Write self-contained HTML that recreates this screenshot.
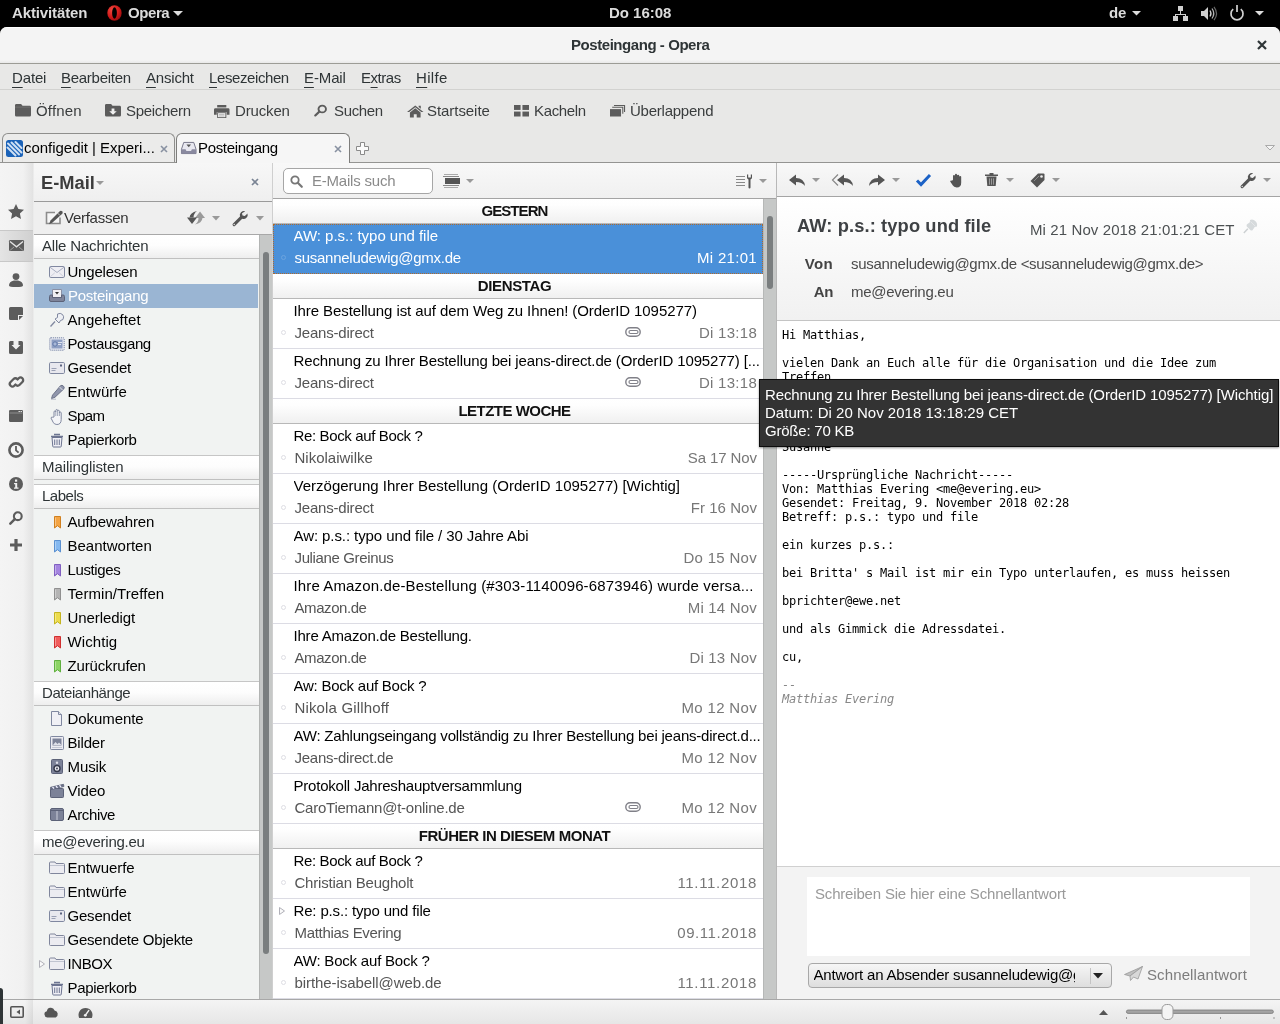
<!DOCTYPE html>
<html lang="de">
<head>
<meta charset="utf-8">
<title>Posteingang - Opera</title>
<style>
*{box-sizing:border-box;margin:0;padding:0}
html,body{width:1280px;height:1024px;overflow:hidden;background:#000}
html{will-change:transform}
body{position:relative;font-family:"Liberation Sans","DejaVu Sans",sans-serif;font-size:15px;color:#2e3436;line-height:18px}
.a{position:absolute;white-space:nowrap}
svg{position:absolute;overflow:visible}
u{text-decoration:underline;text-underline-offset:4px;text-decoration-thickness:1px}
#topbar{left:0;top:0;width:1280px;height:27px;background:#000}
#topbar .t{top:3.500px;font-weight:bold;color:#dcdcdc}
#win{left:0;top:27px;width:1280px;height:997px;background:#e8e8e7;border-radius:7px 7px 0 0;overflow:hidden}
#title{left:0;top:0;width:1280px;height:37px;background:linear-gradient(#fff 0,#fff 1px,#f4f4f4 1px,#f4f4f4 33px,#e9e9e9 36px);border-bottom:1px solid #9c9c96}
#title .t{top:9px;font-weight:bold;color:#2e3436}
#menubar{left:0;top:37px;width:1280px;height:26px;background:#e8e8e7;border-bottom:1px solid #d2d2d0}
#menubar .t{top:4.500px;color:#2e3436}
#toolbar{left:0;top:63px;width:1280px;height:41px;background:#e8e8e7}
#toolbar .t{top:12px;color:#3a3d3e}
#tabbar{left:0;top:104px;width:1280px;height:32px;background:#e8e8e7;border-bottom:1px solid #949492}
.tab{top:2px;height:29px;border:1px solid #8e8e8c;border-bottom:none;border-radius:6px 6px 0 0;background:#ebebea}
.tab.act{background:#f6f6f6;height:30px;border-color:#7e7e7c}
.tab .t{top:5px;color:#000}
/* content */
#content{left:0;top:136px;width:1280px;height:836px;background:#f2f2f2}
#strip{left:0;top:0;width:33px;height:836px;background:linear-gradient(90deg,#f4f4f4 0,#f1f1f1 70%,#e2e2e2 100%)}
#stripsel{left:0;top:67px;width:33px;height:32px;background:linear-gradient(90deg,#e4e4e4,#d0d0d0);border-top:1px solid #c8c8c8;border-bottom:1px solid #c8c8c8}
#panel{left:33px;top:0;width:240px;height:836px;background:#f1f3f2;border-left:1px solid #ebebeb;border-right:1px solid #cfcfcf}
#phead{left:0;top:0;width:238px;height:39px;background:linear-gradient(#f7f7f7,#efefef);border-bottom:1px solid #9a9a9a}
#phead .t{left:7px;top:9px;font-size:18.3px;font-weight:bold;color:#3c3c3c;line-height:22px}
#ptool{left:0;top:39px;width:238px;height:33px;background:#efefef;border-bottom:1px solid #a8a8a8}
#ptool .t{left:30px;top:7px;color:#333}
#tree{left:0;top:72px;width:226px;height:764px;background:#f1f3f2;overflow:hidden}
.th{left:0;width:226px;height:25px;border-top:1px solid #c6c6c6;border-bottom:1px solid #c0c0c0;background:linear-gradient(#ffffff 0,#fdfdfd 45%,#eeeeee 100%);padding:2px 0 0 8px;color:#2e3436}
.tr{left:0;width:226px;height:24px;padding:3px 0 0 33.500px;color:#000}
.tr.sel{left:0;width:224px;background:#9ab5d3;color:#fff;padding-left:34px}
#pscroll{left:225px;top:72px;width:13px;height:764px;background:#c6c8c7;border-left:1px solid #b2b4b3}
#pthumb{left:3px;top:17px;width:6px;height:702px;background:#7a7e7f;border-radius:3px}
/* list */
#list{left:273px;top:0;width:503px;height:836px;background:#fff}
#lbar{left:0;top:0;width:503px;height:36px;background:linear-gradient(#f8f8f8,#f0f0f0);border-bottom:1px solid #a4a4a4}
#search{left:10px;top:5px;width:150px;height:26px;background:#fff;border:1px solid #a6a6a6;border-radius:5px}
#search .t{left:28px;top:3px;color:#8a8a8a}
.gh{left:0;width:490px;height:25px;border-bottom:1px solid #b8b8b8;background:linear-gradient(#ffffff 0,#fefefe 25%,#f0f0f0 100%);text-align:center;font-weight:bold;color:#111;padding:3px 7px 0 0}
.it{left:0;width:490px;height:50px;border-bottom:1px solid #dcdce4;background:#fff}
.it .s{left:20.500px;top:3px;color:#000;max-width:468px;overflow:hidden}
.it .f{left:21.500px;top:25px;color:#555}
.it .d{right:6px;top:25px;color:#777}
.it .c{left:8px;top:31px;width:5px;height:5px;border:1px solid #dedee4;border-radius:50%}
.it.sel{background:#4a90d9;border-bottom:none;height:50px;outline:1px dotted #b06a2c;outline-offset:-1px}
.it.sel .s,.it.sel .f,.it.sel .d{color:#fff}
.it.sel .c{border-color:#6ba4e0}
#lscroll{left:490px;top:36px;width:13px;height:800px;background:#c6c8c7;border-left:1px solid #b6b8b7}
#lthumb{left:3px;top:17px;width:6px;height:73px;background:#7a7e7f;border-radius:3px}
/* message */
#msg{left:776px;top:0;width:504px;height:836px;background:#fff;border-left:1px solid #b8b8b8}
#mbar{left:0;top:0;width:503px;height:34px;background:linear-gradient(#f8f8f8,#efefef);border-bottom:1px solid #a4a4a4}
#mhead{left:0;top:34px;width:503px;height:124px;background:linear-gradient(#ffffff,#f1f1f1);border-bottom:1px solid #c4c4c4}
#mhead .h{left:20px;top:17px;font-size:18.3px;font-weight:bold;color:#3e4144;line-height:24px}
#mhead .dt{left:253px;top:24px;color:#4c5052}
#mhead .k{font-weight:bold;color:#444;text-align:right;width:40px;left:16px}
#mhead .v{left:74px;color:#4a4a4a}
#mbody{left:0;top:158px;width:503px;height:545px;background:#fff}
#mbody pre{position:absolute;left:5px;top:7px;font-family:"DejaVu Sans Mono","Liberation Mono",monospace;font-size:12px;line-height:14px;color:#000;letter-spacing:-0.224px}
#mbody pre i{color:#888}
#qr{left:0;top:703px;width:503px;height:133px;background:#f3f3f3;border-top:1px solid #d0d0d0}
#qrt{left:30px;top:10px;width:443px;height:79px;background:#fff}
#qrt .t{left:8px;top:8px;color:#999}
#qsel{left:31px;top:96px;width:304px;height:25px;border:1px solid #a8a8a8;border-radius:4px;background:linear-gradient(#f6f6f6,#dedede);overflow:hidden}
#qsel .t{left:4.500px;top:2px;color:#000;width:261.500px;overflow:hidden;letter-spacing:-0.190px}
#qsend{left:370px;top:99px;color:#7c7c7c}
/* status */
#status{left:0;top:972px;width:1280px;height:25px;background:linear-gradient(#f4f4f4,#e6e6e6);border-top:1px solid #a8a8a8}
/* tooltip */
#tip{left:759px;top:379px;width:520px;height:68px;background:#333;border:1px solid #0c0c0c;color:#fff;padding:6px 0 0 5px;line-height:18px;box-shadow:0 1px 2px rgba(0,0,0,.4)}
</style>
</head>
<body>
<div id="topbar" class="a">
<span class="a t" style="left:12px;letter-spacing:-0.126px">Aktivitäten</span>
<svg style="left:106.500px;top:4.500px" width="15" height="16" viewBox="0 0 15 16"><defs><radialGradient id="og" cx="0.35" cy="0.3" r="0.8"><stop offset="0" stop-color="#f04a40"/><stop offset="0.6" stop-color="#d01818"/><stop offset="1" stop-color="#8c0c0c"/></radialGradient></defs><ellipse cx="7.500" cy="8" rx="7.200" ry="7.700" fill="url(#og)"/><ellipse cx="7.500" cy="8" rx="2.400" ry="5.700" fill="#000"/></svg>
<span class="a t" style="left:128px;letter-spacing:-0.412px">Opera</span>
<svg style="left:173px;top:11px" width="10" height="5"><path d="M0 0h10l-5 5z" fill="#dcdcdc"/></svg>
<span class="a t" style="left:609px;letter-spacing:-0.029px">Do 16:08</span>
<span class="a t" style="left:1109px;letter-spacing:-0.108px">de</span>
<svg style="left:1132px;top:11px" width="10" height="5"><path d="M0 0h9l-4.500 4.500z" fill="#dcdcdc"/></svg>
<svg style="left:1173px;top:6px" width="16" height="15" fill="#d0d0d0"><rect x="5" y="0" width="5" height="5"/><rect x="0" y="10" width="5" height="5"/><rect x="10" y="10" width="5" height="5"/><path d="M7 5h1v3h5v2h-1v-1h-9v1h-1v-2h5z"/></svg>
<svg style="left:1201px;top:6px" width="16" height="15"><path d="M0 5h3l4-4v13l-4-4h-3z" fill="#d0d0d0"/><path d="M9 4.500q2 3 0 6" stroke="#d0d0d0" stroke-width="1.300" fill="none"/><path d="M11 2.500q3.500 5 0 10" stroke="#b0b0b0" stroke-width="1.300" fill="none"/><path d="M13 0.800q5 6.700 0 13.400" stroke="#666" stroke-width="1.200" fill="none"/></svg>
<svg style="left:1229px;top:5px" width="16" height="16"><path d="M4.200 4.200a6 6 0 1 0 7.600 0" stroke="#d0d0d0" stroke-width="1.700" fill="none"/><path d="M8 0v7" stroke="#d0d0d0" stroke-width="1.700"/></svg>
<svg style="left:1255px;top:11px" width="10" height="5"><path d="M0 0h9l-4.500 4.500z" fill="#dcdcdc"/></svg>
</div>
<div id="win" class="a">
<div id="title" class="a"><span class="a t" style="left:571px;letter-spacing:-0.442px">Posteingang - Opera</span><svg style="left:1257px;top:13px" width="10" height="10"><path d="M1 1l8 8M9 1l-8 8" stroke="#2e3436" stroke-width="2.200"/></svg></div>
<div id="menubar" class="a">
<span class="a t" style="left:12px;letter-spacing:-0.146px"><u>D</u>atei</span>
<span class="a t" style="left:61px;letter-spacing:-0.278px"><u>B</u>earbeiten</span>
<span class="a t" style="left:146px;letter-spacing:-0.200px"><u>A</u>nsicht</span>
<span class="a t" style="left:209px;letter-spacing:-0.403px"><u>L</u>esezeichen</span>
<span class="a t" style="left:304px;letter-spacing:-0.119px"><u>E</u>-Mail</span>
<span class="a t" style="left:361px;letter-spacing:-0.455px">E<u>x</u>tras</span>
<span class="a t" style="left:416px;letter-spacing:0.354px"><u>H</u>ilfe</span>
</div>
<div id="toolbar" class="a">
<svg style="left:15px;top:14px" width="16" height="12.500" viewBox="0 0 17 14" preserveAspectRatio="none"><path d="M1.500 0h5l1.500 2h7.500q1.500 0 1.500 1.500v9q0 1.500-1.500 1.500h-14q-1.500 0-1.500-1.500v-11q0-1.500 1.500-1.500z" fill="#5c5c5c"/><path d="M0 3.500h17" stroke="#777" stroke-width="0.800"/></svg>
<span class="a t" style="left:36px;letter-spacing:0.172px">Öffnen</span>
<svg style="left:105px;top:14px" width="16" height="12.500" viewBox="0 0 17 14" preserveAspectRatio="none"><path d="M1.500 0h5l1.500 2h7.500q1.500 0 1.500 1.500v9q0 1.500-1.500 1.500h-14q-1.500 0-1.500-1.500v-11q0-1.500 1.500-1.500z" fill="#5c5c5c"/><path d="M7 5h3v3h2.500l-4 4-4-4h2.500z" fill="#f0f0f0"/></svg>
<span class="a t" style="left:126px;letter-spacing:-0.305px">Speichern</span>
<svg style="left:213.500px;top:14.500px" width="15.500" height="13" viewBox="0 0 17 16" preserveAspectRatio="none"><rect x="3.500" y="0" width="10" height="3" fill="#5c5c5c"/><path d="M1.500 4h14q1.500 0 1.500 1.500v6.500h-3v-3h-11v3h-3v-6.500q0-1.500 1.500-1.500z" fill="#5c5c5c"/><rect x="4" y="9.500" width="9" height="6" fill="#f4f4f4" stroke="#5c5c5c" stroke-width="1"/><path d="M5.500 11.500h6M5.500 13.500h6" stroke="#999" stroke-width="0.800"/></svg>
<span class="a t" style="left:235px;letter-spacing:-0.151px">Drucken</span>
<svg style="left:314px;top:15px" width="13" height="12" viewBox="0 1 15 15" preserveAspectRatio="none"><circle cx="9.500" cy="6" r="4.300" fill="none" stroke="#5c5c5c" stroke-width="2.200"/><path d="M6.300 9.200l-4.800 4.800" stroke="#5c5c5c" stroke-width="2.600" stroke-linecap="round"/></svg>
<span class="a t" style="left:334px;letter-spacing:-0.346px">Suchen</span>
<svg style="left:406.500px;top:14.500px" width="16.500" height="12.500" viewBox="0 0 17 15" preserveAspectRatio="none"><path d="M8.500 0.500l8.500 8h-2.300l-6.200-5.800-6.200 5.800h-2.300z" fill="#5c5c5c"/><path d="M12 1h2.200v3.500l-2.200-2z" fill="#5c5c5c"/><path d="M3 9l5.500-5 5.500 5v6h-4v-4h-3v4h-4z" fill="#5c5c5c"/></svg>
<span class="a t" style="left:427px;letter-spacing:-0.058px">Startseite</span>
<svg style="left:513.500px;top:14.500px" width="15" height="11.500" viewBox="0 0 16 14" preserveAspectRatio="none" fill="#5c5c5c"><rect x="0" y="0" width="7" height="6"/><rect x="9" y="0" width="7" height="6"/><rect x="0" y="8" width="7" height="6"/><rect x="9" y="8" width="7" height="6"/></svg>
<span class="a t" style="left:534px;letter-spacing:-0.346px">Kacheln</span>
<svg style="left:610px;top:15px" width="15" height="11.500" viewBox="0 0 17 14" preserveAspectRatio="none"><path d="M4.500 0.500h12v8" fill="none" stroke="#5c5c5c" stroke-width="1.200"/><path d="M2.500 2.700h12v8" fill="none" stroke="#5c5c5c" stroke-width="1.200"/><rect x="0" y="5" width="12.500" height="9" fill="#5c5c5c"/></svg>
<span class="a t" style="left:630px;letter-spacing:-0.237px">Überlappend</span>
</div>
<div id="tabbar" class="a">
<div class="a tab" style="left:2px;width:173px">
<svg style="left:3px;top:6px" width="17" height="17" viewBox="0 0 17 17"><rect width="17" height="17" rx="2.500" fill="#1a62b8"/><g stroke="#cfe0f4" stroke-width="2" stroke-linecap="round"><path d="M2 3.500l11 11"/><path d="M5.500 2.500l10 10"/><path d="M1.500 7.500l8 8"/><path d="M9.500 2l6 6"/></g></svg>
<span class="a t" style="left:21px;letter-spacing:-0.030px">configedit | Experi...</span>
<svg style="left:157px;top:11px" width="8" height="8"><path d="M1 1l6 6M7 1l-6 6" stroke="#8891a1" stroke-width="1.600"/></svg>
</div>
<div class="a tab act" style="left:176px;width:174px">
<svg style="left:3.500px;top:7.500px" width="15.500" height="12" viewBox="0 0 17 14" preserveAspectRatio="none"><path d="M3 0.500h11l2.500 8v5h-16v-5z" fill="#e8e8f0" stroke="#6a6a80" stroke-width="1"/><path d="M0.500 8.500h4.500l1 2h5l1-2h4.500v5h-16z" fill="#8a8aa0"/><path d="M6 3h5l-2.500 3z" fill="#555"/></svg>
<span class="a t" style="left:21px;letter-spacing:-0.328px">Posteingang</span>
<svg style="left:157px;top:11px" width="8" height="8"><path d="M1 1l6 6M7 1l-6 6" stroke="#8891a1" stroke-width="1.600"/></svg>
</div>
<svg style="left:356px;top:11px" width="13" height="13"><path d="M4.500 0.500h4v4h4v4h-4v4h-4v-4h-4v-4h4z" fill="#fbfbfb" stroke="#8a8a8a" stroke-width="1"/></svg>
<svg style="left:1265px;top:14px" width="10" height="6"><path d="M0.500 0.500h9l-4.500 4.500z" fill="#f4f4f4" stroke="#aaa" stroke-width="1"/></svg>
</div>
<div id="content" class="a">
<div id="strip" class="a">
<div id="stripsel" class="a"></div>
<svg style="left:8.4px;top:40.9px" width="16" height="15" viewBox="0 0 16 15" ><path d="M8 0l2.400 5 5.600 0.700-4.100 3.800 1.100 5.500-5-2.800-5 2.800 1.100-5.500-4.100-3.800 5.600-0.700z" fill="#5c5c5c"/></svg>
<svg style="left:8.5px;top:77px" width="15" height="11" viewBox="0 0 15 11" ><rect width="15" height="11" rx="1.200" fill="#5c5c5c"/><path d="M1 1.500l6.500 5.300 6.500-5.300" fill="none" stroke="#e4e4e4" stroke-width="1.300"/><path d="M1.200 10.200l3.800-3.200M13.800 10.200l-3.800-3.200" stroke="#b0b0b0" stroke-width="0.800"/></svg>
<svg style="left:9px;top:110px" width="14" height="14" viewBox="0 0 14 14" ><circle cx="7" cy="3.600" r="3.400" fill="#5c5c5c"/><path d="M0 12.500q0-4 5-5h4q5 1 5 5 0 1.500-7 1.500t-7-1.500z" fill="#5c5c5c"/></svg>
<svg style="left:9px;top:144px" width="14" height="13" viewBox="0 0 14 13" ><path d="M1.500 0h11q1.500 0 1.500 1.500v6.500h-5v5h-7.500q-1.500 0-1.500-1.500v-10q0-1.500 1.500-1.500z" fill="#5c5c5c"/><path d="M10 9h4l-4 4z" fill="#5c5c5c"/></svg>
<svg style="left:9px;top:177.5px" width="14" height="13" viewBox="0 0 14 13" ><path d="M1.500 0h3v4h-2l4.500 4.500 4.500-4.500h-2v-4h3q1.500 0 1.500 1.500v10q0 1.500-1.500 1.500h-11q-1.500 0-1.500-1.500v-10q0-1.500 1.500-1.500z" fill="#5c5c5c"/></svg>
<svg style="left:8.5px;top:211.5px" width="15" height="14" viewBox="0 0 15 14" ><g fill="none" stroke="#5c5c5c" stroke-width="2.300" stroke-linecap="round"><path d="M6.500 9.500l-1.200 1.200a2.600 2.600 0 0 1-3.700-3.700l3-3a2.600 2.600 0 0 1 3.700 0"/><path d="M8.500 4.500l1.200-1.200a2.600 2.600 0 0 1 3.700 3.700l-3 3a2.600 2.600 0 0 1-3.700 0"/></g></svg>
<svg style="left:9px;top:247px" width="14" height="12" viewBox="0 0 14 12" ><rect width="14" height="12" rx="1.300" fill="#5c5c5c"/><path d="M0.500 3h13" stroke="#9a9a9a" stroke-width="0.800"/><rect x="9.500" y="1" width="1.500" height="1" fill="#ddd"/><rect x="11.500" y="1" width="1.500" height="1" fill="#ddd"/></svg>
<svg style="left:8px;top:279px" width="16" height="16" viewBox="0 0 16 16" ><circle cx="8" cy="8" r="6.600" fill="#f4f4f4" stroke="#5c5c5c" stroke-width="2.600"/><path d="M8 4v4.300l2.600 2.400" fill="none" stroke="#5c5c5c" stroke-width="1.800"/></svg>
<svg style="left:9px;top:314px" width="14" height="14" viewBox="0 0 14 14" ><circle cx="7" cy="7" r="7" fill="#5c5c5c"/><rect x="6" y="2.500" width="2.200" height="2.200" fill="#f0f0f0"/><path d="M5 6h3.200v4.500h1.300v1.200h-4.500v-1.200h1.200v-3.300h-1.200z" fill="#f0f0f0"/></svg>
<svg style="left:9px;top:348px" width="14" height="14" viewBox="0 0 14 14" ><circle cx="8.800" cy="5.200" r="3.900" fill="none" stroke="#5c5c5c" stroke-width="2.100"/><path d="M5.800 8.200l-4.500 4.500" stroke="#5c5c5c" stroke-width="2.500" stroke-linecap="round"/></svg>
<svg style="left:10px;top:375.5px" width="12" height="12" viewBox="0 0 12 12" ><path d="M4.400 0h3.200v4.400h4.400v3.200h-4.400v4.400h-3.200v-4.400h-4.400v-3.200h4.400z" fill="#5c5c5c"/></svg>
</div>
<div id="panel" class="a">
<div id="phead" class="a"><span class="a t" style="letter-spacing:-0.007px">E-Mail</span>
<svg style="left:62px;top:18px" width="8" height="4"><path d="M0 0h8l-4 4z" fill="#999"/></svg>
<svg style="left:217px;top:15px" width="8" height="8"><path d="M1 1l6 6M7 1l-6 6" stroke="#7a8494" stroke-width="1.700"/></svg>
</div>
<div id="ptool" class="a">
<svg style="left:11px;top:9px" width="18" height="14"><path d="M10 1.500h-8.500v11h13.500v-6" fill="#f6f6f6" stroke="#8c8c8c" stroke-width="1.600"/><path d="M15 0q1.500-0.500 2.300 0.500t0 2.300l-9.800 8.700-3.500 1.700 1.500-3.700z" fill="#555"/><path d="M12.500 2l2.500 2.500" stroke="#ddd" stroke-width="0.800"/></svg>
<span class="a t" style="letter-spacing:-0.269px">Verfassen</span>
<svg style="left:153px;top:9px" width="18" height="14"><path d="M8 7h10l-5-6.500z" fill="#9a9a9a"/><path d="M15.500 7q-0.500 5-7.500 6.500 3.500-2.500 3.500-6.500z" fill="#9a9a9a"/><path d="M0 6.500h10l-5 6.500z" fill="#555"/><path d="M2.500 6.500q0.500-5 7.500-6.500-3.500 2.500-3.500 6.500z" fill="#555"/></svg>
<svg style="left:178px;top:14px" width="8" height="4.500"><path d="M0 0h8l-4 4.500z" fill="#999"/></svg>
<svg style="left:198px;top:8px" width="16" height="17" viewBox="0 0 16 17"><path d="M13.300 1.200a4.200 4.200 0 0 0-5.300 5.300l-7 7a1.500 1.500 0 0 0 2.200 2.200l7-7a4.200 4.200 0 0 0 5.300-5.300l-2.700 2.700-2.300-0.500-0.500-2.300z" fill="#555"/><circle cx="2.200" cy="14.500" r="0.700" fill="#eee"/></svg>
<svg style="left:221.500px;top:14px" width="8" height="4.500"><path d="M0 0h8l-4 4.500z" fill="#999"/></svg>
</div>
<div id="tree" class="a">
<div class="a th" style="top:-1px"><span style="letter-spacing:-0.182px">Alle Nachrichten</span></div>
<div class="a tr" style="top:25px"><svg style="left:15px;top:4px" width="16" height="16" viewBox="0 0 16 16"><rect x="0.500" y="2.500" width="15" height="11" rx="1.200" fill="#eeeef3" stroke="#8088a0"/><path d="M1 3.200l7 5.300 7-5.300" fill="none" stroke="#a8aec0"/><path d="M1.200 12.800l4.600-4M14.800 12.800l-4.600-4" stroke="#c4c8d4" stroke-width="0.800"/></svg><span style="letter-spacing:-0.213px">Ungelesen</span></div>
<div class="a tr sel" style="top:49px"><svg style="left:15px;top:4px" width="16" height="16" viewBox="0 0 16 16"><path d="M3.500 1.500h9v8h-9z" fill="#f0f0f4" stroke="#8a90a4"/><path d="M6 4h4l-2 2.500z" fill="#333"/><path d="M0.500 8.500q0-1.500 1.500-1.500h1.500v2.500h9v-2.500h1.500q1.500 0 1.500 1.500v3.500q0 1.500-1.500 1.500h-12q-1.500 0-1.500-1.500z" fill="#7e849a" stroke="#5c6278"/></svg><span style="letter-spacing:-0.282px">Posteingang</span></div>
<div class="a tr" style="top:73px"><svg style="left:15px;top:4px" width="16" height="16" viewBox="0 0 16 16"><path d="M8.500 2q3-1.500 5 0.500t0.500 5l-2.500 1-1.500 2.500-4-4 2.500-1.500z" fill="#eef0f4" stroke="#8088a0"/><path d="M6 9.500l-4.500 5" stroke="#8088a0" stroke-width="1.300"/></svg><span style="letter-spacing:0.054px">Angeheftet</span></div>
<div class="a tr" style="top:97px"><svg style="left:15px;top:4px" width="16" height="16" viewBox="0 0 16 16"><rect x="0.800" y="1.800" width="14.400" height="12.400" rx="1" fill="#e6e9f1" stroke="#7a86a8" stroke-dasharray="1.200 0.800"/><rect x="2.500" y="3.500" width="11" height="9" fill="#8fa0c4"/><circle cx="6" cy="8" r="2.200" fill="#a8b8d8" stroke="#6078a8"/><path d="M9 6.500h4M9 8.500h3" stroke="#dfe3ee"/></svg><span style="letter-spacing:-0.389px">Postausgang</span></div>
<div class="a tr" style="top:121px"><svg style="left:15px;top:4px" width="16" height="16" viewBox="0 0 16 16"><rect x="0.500" y="2.500" width="15" height="11" rx="1.200" fill="#e8e8ee" stroke="#8088a0"/><path d="M2.500 8.500h5M2.500 10.500h4" stroke="#9aa0b4"/><rect x="11" y="4.500" width="2" height="2" fill="#5c6480"/></svg><span style="letter-spacing:-0.193px">Gesendet</span></div>
<div class="a tr" style="top:145px"><svg style="left:15px;top:4px" width="16" height="16" viewBox="0 0 16 16"><path d="M11.500 1.700q1.500-1 3 0.500t0 3l-8.500 8-3.500 1.500 1-3.500z" fill="#9096ac" stroke="#6c7288"/><path d="M10.500 3l3 3" stroke="#e0e2ea"/><path d="M2 15.200h5" stroke="#b8bcc8"/></svg><span style="letter-spacing:0.012px">Entwürfe</span></div>
<div class="a tr" style="top:169px"><svg style="left:15px;top:4px" width="16" height="16" viewBox="0 0 16 16"><path d="M5 9v-5q0-1 0.900-1t0.900 1v-1.500q0-1 0.900-1t0.900 1v0.800q0-1 0.900-1t0.900 1v1.700q0-1 0.900-1t0.900 1v6.500q0 5-4.300 5-2.800 0-3.800-2.300l-2-4q0-1.500 1.500-1z" fill="#f4f5f8" stroke="#8088a0" stroke-width="1"/><path d="M6.800 4v4M8.600 3.500v4.500M10.400 4.500v3.500" stroke="#8088a0" stroke-width="0.700"/></svg><span style="letter-spacing:-0.597px">Spam</span></div>
<div class="a tr" style="top:193px"><svg style="left:15px;top:4px" width="16" height="16" viewBox="0 0 16 16"><path d="M3 5.500h10l-0.800 9q0 0.500-0.700 0.500h-7q-0.700 0-0.700-0.500z" fill="#f0f0f6" stroke="#6c7490" stroke-width="1"/><path d="M2 4.500h12M5 2.500h6" stroke="#6c7490" stroke-width="1.600" fill="none"/><path d="M5.700 7.500v5.500M8 7.500v5.500M10.300 7.500v5.500" stroke="#6c7490" stroke-width="1" fill="none"/></svg><span style="letter-spacing:-0.345px">Papierkorb</span></div>
<div class="a th" style="top:220px"><span style="letter-spacing:-0.081px">Mailinglisten</span></div>
<div class="a th" style="top:249px"><span style="letter-spacing:-0.484px">Labels</span></div>
<div class="a tr" style="top:275px"><svg style="left:19.500px;top:5.500px" width="7" height="13"><path d="M0.500 0.500h6v11.500l-3-2.300-3 2.300z" fill="#f4a444" stroke="#d08020" stroke-width="1"/><path d="M1.500 1.500v8.500" stroke="rgba(255,255,255,.35)" stroke-width="1"/></svg><span style="letter-spacing:-0.164px">Aufbewahren</span></div>
<div class="a tr" style="top:299px"><svg style="left:19.500px;top:5.500px" width="7" height="13"><path d="M0.500 0.500h6v11.500l-3-2.300-3 2.300z" fill="#84b8f0" stroke="#5a90d0" stroke-width="1"/><path d="M1.500 1.500v8.500" stroke="rgba(255,255,255,.35)" stroke-width="1"/></svg><span style="letter-spacing:0.006px">Beantworten</span></div>
<div class="a tr" style="top:323px"><svg style="left:19.500px;top:5.500px" width="7" height="13"><path d="M0.500 0.500h6v11.500l-3-2.300-3 2.300z" fill="#a484e0" stroke="#8060c0" stroke-width="1"/><path d="M1.500 1.500v8.500" stroke="rgba(255,255,255,.35)" stroke-width="1"/></svg><span style="letter-spacing:-0.372px">Lustiges</span></div>
<div class="a tr" style="top:347px"><svg style="left:19.500px;top:5.500px" width="7" height="13"><path d="M0.500 0.500h6v11.500l-3-2.300-3 2.300z" fill="#b4b4b4" stroke="#909090" stroke-width="1"/><path d="M1.500 1.500v8.500" stroke="rgba(255,255,255,.35)" stroke-width="1"/></svg><span style="letter-spacing:0.059px">Termin/Treffen</span></div>
<div class="a tr" style="top:371px"><svg style="left:19.500px;top:5.500px" width="7" height="13"><path d="M0.500 0.500h6v11.500l-3-2.300-3 2.300z" fill="#ecdc4c" stroke="#c4b420" stroke-width="1"/><path d="M1.500 1.500v8.500" stroke="rgba(255,255,255,.35)" stroke-width="1"/></svg><span style="letter-spacing:-0.087px">Unerledigt</span></div>
<div class="a tr" style="top:395px"><svg style="left:19.500px;top:5.500px" width="7" height="13"><path d="M0.500 0.500h6v11.500l-3-2.300-3 2.300z" fill="#f05c5c" stroke="#d03030" stroke-width="1"/><path d="M1.500 1.500v8.500" stroke="rgba(255,255,255,.35)" stroke-width="1"/></svg><span style="letter-spacing:0.087px">Wichtig</span></div>
<div class="a tr" style="top:419px"><svg style="left:19.500px;top:5.500px" width="7" height="13"><path d="M0.500 0.500h6v11.500l-3-2.300-3 2.300z" fill="#8cd464" stroke="#60b040" stroke-width="1"/><path d="M1.500 1.500v8.500" stroke="rgba(255,255,255,.35)" stroke-width="1"/></svg><span style="letter-spacing:-0.159px">Zurückrufen</span></div>
<div class="a th" style="top:446px"><span style="letter-spacing:-0.435px">Dateianhänge</span></div>
<div class="a tr" style="top:472px"><svg style="left:15px;top:4px" width="16" height="16" viewBox="0 0 16 16"><path d="M2.500 0.500h7l3 3v11h-10z" fill="#f0f0f5" stroke="#8088a0"/><path d="M9.500 0.500v3h3" fill="#dfe1ea" stroke="#8088a0"/></svg><span style="letter-spacing:-0.069px">Dokumente</span></div>
<div class="a tr" style="top:496px"><svg style="left:15px;top:4px" width="16" height="16" viewBox="0 0 16 16"><rect x="1.500" y="1.500" width="13" height="13" rx="0.800" fill="#ececf2" stroke="#8088a0"/><rect x="3.500" y="3.500" width="9" height="7" fill="#7c8298"/><path d="M4 10l2.500-3 2 2 1.500-1.500 2.500 2.500z" fill="#dfe1ea"/><path d="M3 12.500h10" stroke="#c4c8d4"/></svg><span style="letter-spacing:-0.160px">Bilder</span></div>
<div class="a tr" style="top:520px"><svg style="left:15px;top:4px" width="16" height="16" viewBox="0 0 16 16"><rect x="2.500" y="0.500" width="11" height="14" rx="1" fill="#7c8298" stroke="#5c6278"/><circle cx="8" cy="9.500" r="3" fill="#e8e8ee" stroke="#33384a" stroke-width="1.400"/><circle cx="8" cy="9.500" r="0.900" fill="#33384a"/><circle cx="8" cy="3.800" r="1.200" fill="#dfe1ea"/></svg><span style="letter-spacing:-0.074px">Musik</span></div>
<div class="a tr" style="top:544px"><svg style="left:15px;top:4px" width="16" height="16" viewBox="0 0 16 16"><rect x="1.500" y="5.500" width="13" height="9" rx="0.800" fill="#7c8298" stroke="#5c6278"/><path d="M1.500 4.300l13-3 0.400 2.200-13 3z" fill="#6c7288" stroke="#5c6278" stroke-width="0.800"/><path d="M3.500 3.800l1.500 1.900M7 3l1.500 1.900M10.500 2.200l1.500 1.900" stroke="#eef" stroke-width="1.300"/></svg><span style="letter-spacing:-0.079px">Video</span></div>
<div class="a tr" style="top:568px"><svg style="left:15px;top:4px" width="16" height="16" viewBox="0 0 16 16"><rect x="1.500" y="1.500" width="13" height="12" rx="1.500" fill="#7c8298" stroke="#5c6278"/><path d="M1.500 3.500h13" stroke="#5c6278"/><path d="M8 4.500v8.500" stroke="#dfe1ea" stroke-width="1.600" stroke-dasharray="1 1"/></svg><span style="letter-spacing:-0.347px">Archive</span></div>
<div class="a th" style="top:595px"><span style="letter-spacing:-0.271px">me@evering.eu</span></div>
<div class="a tr" style="top:621px"><svg style="left:15px;top:4px" width="16" height="16" viewBox="0 0 16 16"><path d="M0.500 3q0-1 1-1h4.500l1 1.500h7.500q1 0 1 1v8q0 1-1 1h-13q-1 0-1-1z" fill="#ececf1" stroke="#80869c" stroke-width="1"/><path d="M1 5.500h14" stroke="#c0c4d0" stroke-width="1"/></svg><span style="letter-spacing:-0.050px">Entwuerfe</span></div>
<div class="a tr" style="top:645px"><svg style="left:15px;top:4px" width="16" height="16" viewBox="0 0 16 16"><path d="M0.500 3q0-1 1-1h4.500l1 1.500h7.500q1 0 1 1v8q0 1-1 1h-13q-1 0-1-1z" fill="#ececf1" stroke="#80869c" stroke-width="1"/><path d="M1 5.500h14" stroke="#c0c4d0" stroke-width="1"/></svg><span style="letter-spacing:0.012px">Entwürfe</span></div>
<div class="a tr" style="top:669px"><svg style="left:15px;top:4px" width="16" height="16" viewBox="0 0 16 16"><rect x="0.500" y="2.500" width="15" height="11" rx="1.200" fill="#e8e8ee" stroke="#8088a0"/><path d="M2.500 8.500h5M2.500 10.500h4" stroke="#9aa0b4"/><rect x="11" y="4.500" width="2" height="2" fill="#5c6480"/></svg><span style="letter-spacing:-0.193px">Gesendet</span></div>
<div class="a tr" style="top:693px"><svg style="left:15px;top:4px" width="16" height="16" viewBox="0 0 16 16"><path d="M0.500 3q0-1 1-1h4.500l1 1.500h7.500q1 0 1 1v8q0 1-1 1h-13q-1 0-1-1z" fill="#ececf1" stroke="#80869c" stroke-width="1"/><path d="M1 5.500h14" stroke="#c0c4d0" stroke-width="1"/></svg><span style="letter-spacing:-0.222px">Gesendete Objekte</span></div>
<div class="a tr" style="top:717px"><svg style="left:15px;top:4px" width="16" height="16" viewBox="0 0 16 16"><path d="M0.500 3q0-1 1-1h4.500l1 1.500h7.500q1 0 1 1v8q0 1-1 1h-13q-1 0-1-1z" fill="#ececf1" stroke="#80869c" stroke-width="1"/><path d="M1 5.500h14" stroke="#c0c4d0" stroke-width="1"/></svg><span style="letter-spacing:-0.398px">INBOX</span></div>
<div class="a tr" style="top:741px"><svg style="left:15px;top:4px" width="16" height="16" viewBox="0 0 16 16"><path d="M3 5.500h10l-0.800 9q0 0.500-0.700 0.500h-7q-0.700 0-0.700-0.500z" fill="#f0f0f6" stroke="#6c7490" stroke-width="1"/><path d="M2 4.500h12M5 2.500h6" stroke="#6c7490" stroke-width="1.600" fill="none"/><path d="M5.700 7.500v5.500M8 7.500v5.500M10.300 7.500v5.500" stroke="#6c7490" stroke-width="1" fill="none"/></svg><span style="letter-spacing:-0.345px">Papierkorb</span></div>
<svg style="left:5px;top:725px" width="6" height="8"><path d="M0.500 0.500l5 3.500-5 3.500z" fill="#fafafa" stroke="#b0b0b8" stroke-width="1"/></svg>
</div>
<div id="pscroll" class="a"><div id="pthumb" class="a"></div></div>
</div>
<div id="list" class="a">
<div id="lbar" class="a">
<div id="search" class="a"><svg style="left:6px;top:6px" width="13" height="13"><circle cx="5" cy="5" r="3.700" fill="none" stroke="#777" stroke-width="1.800"/><path d="M7.800 7.800l4 4" stroke="#777" stroke-width="2.200" stroke-linecap="round"/></svg><span class="a t" style="letter-spacing:-0.213px">E-Mails such</span></div>
<svg style="left:170px;top:11px" width="17" height="14"><rect x="1" y="0" width="14" height="1" fill="#aaa"/><rect x="0" y="2" width="16" height="1" fill="#888"/><rect x="2" y="4" width="15" height="6" fill="#555"/><rect x="0" y="11" width="16" height="1" fill="#888"/><rect x="1" y="13" width="14" height="1" fill="#aaa"/></svg>
<svg style="left:193px;top:16px" width="8" height="4"><path d="M0 0h8l-4 4z" fill="#999"/></svg>
<svg style="left:463px;top:11px" width="17" height="15"><path d="M0 2.500h9M0 5.500h9M0 8.500h9M0 11.500h9" stroke="#888" stroke-width="1"/><path d="M11 0.500v3q0 1.500 1.500 2v8q0 1 1 1t1-1v-8q1.500-0.500 1.500-2v-3h-1.200v3h-2.600v-3z" fill="#555"/></svg>
<svg style="left:486px;top:16px" width="8" height="4"><path d="M0 0h8l-4 4z" fill="#999"/></svg>
</div>
<div class="a gh" style="top:36px"><span style="letter-spacing:-0.924px">GESTERN</span></div>
<div class="a it sel" style="top:61px"><span class="a s" style="letter-spacing:-0.023px">AW: p.s.: typo und file</span><span class="a c"></span><span class="a f" style="letter-spacing:-0.271px">susanneludewig@gmx.de</span><span class="a d" style="letter-spacing:0.313px">Mi 21:01</span></div>
<div class="a gh" style="top:111px"><span style="letter-spacing:-0.357px">DIENSTAG</span></div>
<div class="a it" style="top:136px"><span class="a s" style="letter-spacing:-0.084px">Ihre Bestellung ist auf dem Weg zu Ihnen! (OrderID 1095277)</span><span class="a c"></span><span class="a f" style="letter-spacing:-0.200px">Jeans-direct</span><svg style="left:352px;top:28px" width="16" height="10"><rect x="0.800" y="0.800" width="14.400" height="8.400" rx="4.200" fill="none" stroke="#808088" stroke-width="1.400"/><rect x="4" y="3.500" width="9" height="3" rx="1.500" fill="none" stroke="#808088" stroke-width="1.200"/></svg><span class="a d" style="letter-spacing:0.272px">Di 13:18</span></div>
<div class="a it" style="top:186px"><span class="a s" style="letter-spacing:-0.126px">Rechnung zu Ihrer Bestellung bei jeans-direct.de (OrderID 1095277) [...</span><span class="a c"></span><span class="a f" style="letter-spacing:-0.200px">Jeans-direct</span><svg style="left:352px;top:28px" width="16" height="10"><rect x="0.800" y="0.800" width="14.400" height="8.400" rx="4.200" fill="none" stroke="#808088" stroke-width="1.400"/><rect x="4" y="3.500" width="9" height="3" rx="1.500" fill="none" stroke="#808088" stroke-width="1.200"/></svg><span class="a d" style="letter-spacing:0.272px">Di 13:18</span></div>
<div class="a gh" style="top:236px"><span style="letter-spacing:-0.523px">LETZTE WOCHE</span></div>
<div class="a it" style="top:261px"><span class="a s" style="letter-spacing:-0.361px">Re: Bock auf Bock ?</span><span class="a c"></span><span class="a f">Nikolaiwilke</span><span class="a d" style="letter-spacing:-0.083px">Sa 17 Nov</span></div>
<div class="a it" style="top:311px"><span class="a s" style="letter-spacing:0.009px">Verzögerung Ihrer Bestellung (OrderID 1095277) [Wichtig]</span><span class="a c"></span><span class="a f" style="letter-spacing:-0.200px">Jeans-direct</span><span class="a d" style="letter-spacing:0.049px">Fr 16 Nov</span></div>
<div class="a it" style="top:361px"><span class="a s" style="letter-spacing:-0.083px">Aw: p.s.: typo und file / 30 Jahre Abi</span><span class="a c"></span><span class="a f" style="letter-spacing:-0.362px">Juliane Greinus</span><span class="a d" style="letter-spacing:0.297px">Do 15 Nov</span></div>
<div class="a it" style="top:411px"><span class="a s" style="letter-spacing:0.133px">Ihre Amazon.de-Bestellung (#303-1140096-6873946) wurde versa...</span><span class="a c"></span><span class="a f" style="letter-spacing:-0.427px">Amazon.de</span><span class="a d" style="letter-spacing:0.197px">Mi 14 Nov</span></div>
<div class="a it" style="top:461px"><span class="a s" style="letter-spacing:-0.198px">Ihre Amazon.de Bestellung.</span><span class="a c"></span><span class="a f" style="letter-spacing:-0.427px">Amazon.de</span><span class="a d" style="letter-spacing:0.188px">Di 13 Nov</span></div>
<div class="a it" style="top:511px"><span class="a s" style="letter-spacing:-0.237px">Aw: Bock auf Bock ?</span><span class="a c"></span><span class="a f" style="letter-spacing:0.152px">Nikola Gillhoff</span><span class="a d" style="letter-spacing:0.334px">Mo 12 Nov</span></div>
<div class="a it" style="top:561px"><span class="a s" style="letter-spacing:-0.204px">AW: Zahlungseingang vollständig zu Ihrer Bestellung bei jeans-direct.d...</span><span class="a c"></span><span class="a f" style="letter-spacing:-0.251px">Jeans-direct.de</span><span class="a d" style="letter-spacing:0.334px">Mo 12 Nov</span></div>
<div class="a it" style="top:611px"><span class="a s" style="letter-spacing:-0.213px">Protokoll Jahreshauptversammlung</span><span class="a c"></span><span class="a f" style="letter-spacing:-0.241px">CaroTiemann@t-online.de</span><svg style="left:352px;top:28px" width="16" height="10"><rect x="0.800" y="0.800" width="14.400" height="8.400" rx="4.200" fill="none" stroke="#808088" stroke-width="1.400"/><rect x="4" y="3.500" width="9" height="3" rx="1.500" fill="none" stroke="#808088" stroke-width="1.200"/></svg><span class="a d" style="letter-spacing:0.334px">Mo 12 Nov</span></div>
<div class="a gh" style="top:661px"><span style="letter-spacing:-0.447px">FRÜHER IN DIESEM MONAT</span></div>
<div class="a it" style="top:686px"><span class="a s" style="letter-spacing:-0.361px">Re: Bock auf Bock ?</span><span class="a c"></span><span class="a f" style="letter-spacing:-0.210px">Christian Beugholt</span><span class="a d" style="letter-spacing:0.669px">11.11.2018</span></div>
<div class="a it" style="top:736px"><span class="a s" style="letter-spacing:-0.157px">Re: p.s.: typo und file</span><span class="a c"></span><span class="a f" style="letter-spacing:-0.301px">Matthias Evering</span><span class="a d" style="letter-spacing:0.583px">09.11.2018</span><svg style="left:6px;top:8px" width="6" height="8"><path d="M0.500 0.500l5 3.500-5 3.500z" fill="#fafafa" stroke="#b0b0b8" stroke-width="1"/></svg></div>
<div class="a it" style="top:786px"><span class="a s" style="letter-spacing:-0.203px">AW: Bock auf Bock ?</span><span class="a c"></span><span class="a f" style="letter-spacing:-0.073px">birthe-isabell@web.de</span><span class="a d" style="letter-spacing:0.669px">11.11.2018</span></div>
<div id="lscroll" class="a"><div id="lthumb" class="a"></div></div>
</div>
<div id="msg" class="a">
<div id="mbar" class="a">
<svg style="left:12px;top:11px" width="16" height="12"><path d="M7 0.500v3.500q8 0 9 8-3-4-9-4v3.500l-7-5.500z" fill="#555"/></svg>
<svg style="left:35px;top:15px" width="8" height="4"><path d="M0 0h8l-4 4z" fill="#999"/></svg>
<svg style="left:55px;top:11px" width="21" height="12"><path d="M6 0.500l-5.500 5.500 5.500 5.500" fill="none" stroke="#888" stroke-width="1.200"/><g transform="translate(5,0)"><path d="M7 0.500v3.500q8 0 9 8-3-4-9-4v3.500l-7-5.500z" fill="#555"/></g></svg>
<svg style="left:92px;top:11px" width="16" height="12"><g transform="translate(16,0) scale(-1,1)"><path d="M7 0.500v3.500q8 0 9 8-3-4-9-4v3.500l-7-5.500z" fill="#555"/></g></svg>
<svg style="left:115px;top:15px" width="8" height="4"><path d="M0 0h8l-4 4z" fill="#999"/></svg>
<svg style="left:139px;top:11px" width="15" height="12"><path d="M1 6.500l4 4 9-9.500" fill="none" stroke="#1c62c6" stroke-width="3"/></svg>
<svg style="left:173px;top:9.500px" width="14" height="14" viewBox="0 0 14 16.500" preserveAspectRatio="none"><path d="M3 8v-4.500q0-1 1-1t1 1v-1.500q0-1 1-1t1 1v1q0-1 1.100-1t1.100 1v1.500q0-1 1-1t1 1v7q0 5.500-4.500 5.500-3 0-4-2.500l-2.500-4.500q0-1.500 1.800-1z" fill="#555"/></svg>
<svg style="left:208px;top:10px" width="13" height="13.500" viewBox="0 0 13 15" preserveAspectRatio="none"><path d="M1.500 4h10l-0.800 10.500h-8.400z" fill="#555"/><path d="M0 2.500h13M4.500 0.800h4" stroke="#555" stroke-width="1.500"/><path d="M4.500 6v7M6.500 6v7M8.500 6v7" stroke="#bbb" stroke-width="0.700"/></svg>
<svg style="left:229px;top:15px" width="8" height="4"><path d="M0 0h8l-4 4z" fill="#999"/></svg>
<svg style="left:253px;top:10px" width="15" height="15"><path d="M8 0.500h5.500q1 0 1 1v5.500l-7.500 7.500-6.500-6.500z" fill="#555"/><circle cx="11.500" cy="3.500" r="1.300" fill="#f0f0f0"/><path d="M4 8l5-5" stroke="#999" stroke-width="0.800"/></svg>
<svg style="left:275px;top:15px" width="8" height="4"><path d="M0 0h8l-4 4z" fill="#999"/></svg>
<svg style="left:463px;top:9px" width="16" height="17" viewBox="0 0 16 17"><path d="M13.300 1.200a4.200 4.200 0 0 0-5.300 5.300l-7 7a1.500 1.500 0 0 0 2.200 2.200l7-7a4.200 4.200 0 0 0 5.300-5.300l-2.700 2.700-2.300-0.500-0.500-2.300z" fill="#555"/><circle cx="2.200" cy="14.500" r="0.700" fill="#eee"/></svg>
<svg style="left:486px;top:15px" width="8" height="4"><path d="M0 0h8l-4 4z" fill="#999"/></svg>
</div>
<div id="mhead" class="a">
<span class="a h" style="letter-spacing:0.117px">AW: p.s.: typo und file</span>
<span class="a dt" style="letter-spacing:0.102px">Mi 21 Nov 2018 21:01:21 CET</span>
<svg style="left:466px;top:22px" width="15" height="15"><path d="M7 1q3-1.300 5.500 1.200t1.200 5.500l-2 0.300-2.200 3.200q-1 0.500-2 0l-3.700-3.700q-0.500-1 0-2l3-2.200z" fill="#d6dadc"/><path d="M4.800 9.700l-4 4.300" stroke="#ccd0d2" stroke-width="1.400"/><path d="M7.500 2.500l5 5" stroke="#e8eaec" stroke-width="0.800"/></svg>
<span class="a k" style="top:58px;letter-spacing:0.360px">Von</span><span class="a v" style="top:58px;letter-spacing:-0.297px">susanneludewig@gmx.de &lt;susanneludewig@gmx.de&gt;</span>
<span class="a k" style="top:86px;letter-spacing:-0.350px">An</span><span class="a v" style="top:86px;letter-spacing:-0.279px">me@evering.eu</span>
</div>
<div id="mbody" class="a"><pre>Hi Matthias,

vielen Dank an Euch alle für die Organisation und die Idee zum
Treffen

Viele Grüße


Susanne

-----Ursprüngliche Nachricht-----
Von: Matthias Evering &lt;me@evering.eu&gt;
Gesendet: Freitag, 9. November 2018 02:28
Betreff: p.s.: typo und file

ein kurzes p.s.:

bei Britta' s Mail ist mir ein Typo unterlaufen, es muss heissen

bprichter@ewe.net

und als Gimmick die Adressdatei.

cu,

<i>--
Matthias Evering</i></pre></div>
<div id="qr" class="a">
<div id="qrt" class="a"><span class="a t" style="letter-spacing:-0.183px">Schreiben Sie hier eine Schnellantwort</span></div>
<div id="qsel" class="a"><span class="a t">Antwort an Absender susanneludewig@gmx.de</span><svg style="left:281px;top:4px" width="1" height="16"><rect width="1" height="16" fill="#c4c4c4"/></svg><svg style="left:284px;top:9px" width="10" height="6"><path d="M0 0h10l-5 5.500z" fill="#222"/></svg></div>
<svg style="left:347px;top:99px" width="19" height="15"><path d="M18.500 0.500l-18 8 5.500 1.500z" fill="#c0c0c0" stroke="#999" stroke-width="0.800"/><path d="M18.500 0.500l-12.500 9.500 0.500 4.500 3-3.500 4.500 2z" fill="#d8d8d8" stroke="#999" stroke-width="0.800"/></svg>
<span id="qsend" class="a"><span style="letter-spacing:0.115px">Schnellantwort</span></span>
</div>
</div>
</div>
<div id="status" class="a">
<div class="a" style="left:0;top:0;width:33px;height:24px;background:linear-gradient(90deg,rgba(0,0,0,0) 0,rgba(0,0,0,0) 75%,rgba(0,0,0,.07) 100%)"></div>
<svg style="left:10px;top:6px" width="14" height="12"><rect x="0.800" y="0.800" width="12.400" height="10.400" rx="1" fill="none" stroke="#555" stroke-width="1.600"/><path d="M10 3.500v5l-3.500-2.500z" fill="#555"/></svg>
<svg style="left:43.500px;top:6.500px" width="15" height="10.500" viewBox="0 0 16 11"><path d="M3.500 11a3.300 3.300 0 0 1-0.500-6.500 4.300 4.300 0 0 1 8.300-1 4 4 0 0 1 1.200 7.500z" fill="#555"/></svg>
<svg style="left:77.500px;top:6.500px" width="15" height="11"><path d="M1.200 11a7 7 0 1 1 12.600 0z" fill="#585858"/><path d="M7.500 8l3.300-4.500" stroke="#f0f0f0" stroke-width="1.300" stroke-linecap="round"/><circle cx="7.300" cy="8.300" r="1.400" fill="#f0f0f0"/></svg>
<svg style="left:1099px;top:10px" width="9" height="5"><path d="M0 5h9l-4.500-5z" fill="#555"/></svg>
<svg style="left:1126px;top:4px" width="150" height="18"><rect x="0.400" y="6" width="147" height="3.400" rx="1.700" fill="#a4a4a4" stroke="#787878" stroke-width="0.800"/><path d="M0.500 13v2M41.500 14v2M94.500 13v2M148 13v2" stroke="#999" stroke-width="1"/><rect x="36" y="0.500" width="11" height="15" rx="4.500" fill="#f4f4f4" stroke="#999" stroke-width="1"/></svg>
</div>
</div>
<div id="corner" class="a" style="left:0;top:988px;width:3px;height:36px;background:#2e3436;border-radius:0 3px 0 0"></div>
<div id="tip" class="a"><span style="letter-spacing:-0.104px">Rechnung zu Ihrer Bestellung bei jeans-direct.de (OrderID 1095277) [Wichtig]</span><br><span style="letter-spacing:0.019px">Datum: Di 20 Nov 2018 13:18:29 CET</span><br><span style="letter-spacing:-0.222px">Größe: 70 KB</span></div>
</body>
</html>
